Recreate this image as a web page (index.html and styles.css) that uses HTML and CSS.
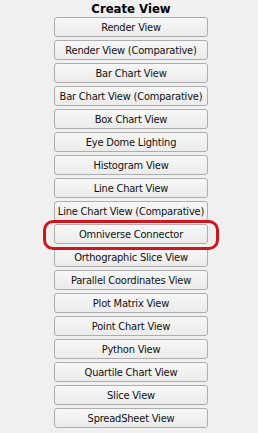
FILE: index.html
```html
<!DOCTYPE html>
<html>
<head>
<meta charset="utf-8">
<link rel="stylesheet" href="styles.css">
</head>
<body>
<div class="panel">
  <div class="title">Create View</div>
  <div class="list">
    <button class="btn">Render View</button>
    <button class="btn">Render View (Comparative)</button>
    <button class="btn">Bar Chart View</button>
    <button class="btn">Bar Chart View (Comparative)</button>
    <button class="btn">Box Chart View</button>
    <button class="btn">Eye Dome Lighting</button>
    <button class="btn">Histogram View</button>
    <button class="btn">Line Chart View</button>
    <button class="btn">Line Chart View (Comparative)</button>
    <div class="highlight-wrap">
      <button class="btn">Omniverse Connector</button>
      <span class="highlight"></span>
    </div>
    <button class="btn">Orthographic Slice View</button>
    <button class="btn">Parallel Coordinates View</button>
    <button class="btn">Plot Matrix View</button>
    <button class="btn">Point Chart View</button>
    <button class="btn">Python View</button>
    <button class="btn">Quartile Chart View</button>
    <button class="btn">Slice View</button>
    <button class="btn">SpreadSheet View</button>
  </div>
</div>
</body>
</html>
```
FILE: styles.css
```css
html, body {
  margin: 0;
  padding: 0;
  background: #f0f0f0;
}
body {
  font-family: "DejaVu Sans Condensed", "DejaVu Sans", sans-serif;
  font-stretch: condensed;
  color: #000;
}
.panel {
  width: 154px;
  padding-left: 54px;
}
.title {
  height: 17px;
  line-height: 17px;
  text-align: center;
  font-weight: bold;
  font-size: 13px;
}
.list {
  display: flex;
  flex-direction: column;
  gap: 3px;
}
.btn {
  display: block;
  width: 154px;
  height: 20px;
  margin: 0;
  padding: 0;
  box-sizing: border-box;
  border: 1px solid #adadad;
  border-radius: 3px;
  background: linear-gradient(#f7f7f7, #ebebeb);
  font-family: "DejaVu Sans Condensed", "DejaVu Sans", sans-serif;
  font-stretch: condensed;
  font-size: 11px;
  letter-spacing: -0.2px;
  color: #111;
  text-align: center;
  white-space: nowrap;
  line-height: 19px;
}
.highlight-wrap {
  position: relative;
}
.highlight {
  position: absolute;
  left: -11px;
  right: -11px;
  top: -4px;
  bottom: -6px;
  border: 3px solid #d2141d;
  border-radius: 10px;
}
```
